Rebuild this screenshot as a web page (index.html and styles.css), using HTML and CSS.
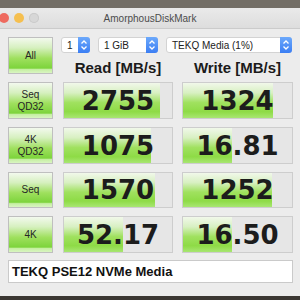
FILE: index.html
```html
<!DOCTYPE html>
<html>
<head>
  <meta name="viewport" content="width=device-width, initial-scale=1.0">
  <title>AmorphousDiskMark</title>
  <link rel="stylesheet" href="styles.css">
</head>
<body>
  <div class="desktop"></div>
  <!-- Window -->
  <div class="window">
    <div class="titlebar">
      <div class="lights">
        <span class="light close"></span>
        <span class="light min"></span>
        <span class="light zoom"></span>
      </div>
      <div class="title">AmorphousDiskMark</div>
      <div></div>
    </div>

    <div class="panel">
      <div class="tag">All</div>
      <div class="setup">
        <div class="selects">
          <div class="select s-count"><span>1</span><i class="stepper"><svg width="12" height="16" viewBox="0 0 12 16"><path d="M3.5 6.5 6 4 8.5 6.5M3.5 9.5 6 12 8.5 9.5" fill="none" stroke="#fff" stroke-width="1.3"/></svg></i></div>
          <div class="select s-size"><span>1 GiB</span><i class="stepper"><svg width="12" height="16" viewBox="0 0 12 16"><path d="M3.5 6.5 6 4 8.5 6.5M3.5 9.5 6 12 8.5 9.5" fill="none" stroke="#fff" stroke-width="1.3"/></svg></i></div>
          <div class="select s-target"><span>TEKQ Media (1%)</span><i class="stepper"><svg width="12" height="16" viewBox="0 0 12 16"><path d="M3.5 6.5 6 4 8.5 6.5M3.5 9.5 6 12 8.5 9.5" fill="none" stroke="#fff" stroke-width="1.3"/></svg></i></div>
        </div>
        <div class="heads">
          <div>Read [MB/s]</div>
          <div>Write [MB/s]</div>
        </div>
      </div>

      <!-- Seq QD32 -->
      <div class="tag">Seq<br>QD32</div>
      <div class="meter"><div class="bar" style="width: 88.8%"></div><div class="value">2755</div></div>
      <div class="meter"><div class="bar" style="width: 82.4%"></div><div class="value">1324</div></div>

      <!-- 4K QD32 -->
      <div class="tag">4K<br>QD32</div>
      <div class="meter"><div class="bar" style="width: 80.6%"></div><div class="value">1075</div></div>
      <div class="meter"><div class="bar" style="width: 44.5%"></div><div class="value">16.81</div></div>

      <!-- Seq -->
      <div class="tag">Seq</div>
      <div class="meter"><div class="bar" style="width: 83.9%"></div><div class="value">1570</div></div>
      <div class="meter"><div class="bar" style="width: 82%"></div><div class="value">1252</div></div>

      <!-- 4K -->
      <div class="tag">4K</div>
      <div class="meter"><div class="bar" style="width: 54.3%"></div><div class="value">52.17</div></div>
      <div class="meter"><div class="bar" style="width: 44.5%"></div><div class="value">16.50</div></div>

      <div class="drive">TEKQ PSE12 NVMe Media</div>
    </div>
  </div>
</body>
</html>
```

FILE: styles.css
```css
body {
  margin: 0;
  background-color: #3b3732;
  font-family: "Liberation Sans", Arial, sans-serif;
  overflow: hidden;
}
.desktop {
  height: 8px;
  background-color: #736e66;
}
.window {
  height: 288px;
  background-color: #ececec;
}
.titlebar {
  height: 20px;
  display: grid;
  grid-template-columns: 1fr auto 1fr;
  align-items: center;
  background: linear-gradient(#eaeaea, #dddddd);
  border-bottom: 1px solid #cbcbcb;
}
.lights {
  display: flex;
  gap: 5px;
  margin-left: -1px;
}
.light {
  width: 10px;
  height: 10px;
  border-radius: 50%;
}
.close {
  background-color: #ee6a5f;
}
.min {
  background-color: #f5bf4f;
}
.zoom {
  background-color: #d7d7d7;
  box-shadow: inset 0 0 0 1px #cacaca;
}
.title {
  font-size: 10px;
  color: #4c4c4c;
}
.panel {
  padding: 8px 0 0 8px;
  display: grid;
  grid-template-columns: 46px 110px 111px;
  grid-template-rows: 37px 37px 37px 36px 37px 22px;
  gap: 8px 9px;
}
.tag {
  width: 45px;
  box-sizing: border-box;
  border: 1px solid #bfbfbf;
  background: linear-gradient(#f3f9ee 0%, #d6f0bf 28%, #9fe05e 58%, #7dd43c 86%, #c6efa3 90%, #d9f5c2 100%);
  display: flex;
  align-items: center;
  justify-content: center;
  text-align: center;
  font-size: 10px;
  line-height: 12px;
  color: #262626;
}
.setup {
  grid-column: 2 / 4;
  display: flex;
  flex-direction: column;
  justify-content: space-between;
}
.selects {
  display: flex;
  gap: 8px;
  height: 16px;
  margin-left: -2px;
}
.select {
  display: flex;
  align-items: center;
  box-sizing: border-box;
  background-color: #ffffff;
  border: 1px solid #d3d3d3;
  border-radius: 3px;
  font-size: 10px;
  color: #222;
}
.select span {
  flex: 1;
  padding-left: 5px;
}
.s-count {
  width: 29px;
}
.s-size {
  width: 60px;
}
.s-target {
  width: 126px;
}
.stepper {
  width: 12px;
  align-self: stretch;
  margin: -1px -1px -1px 0;
  border-radius: 0 3px 3px 0;
  background: linear-gradient(#6ca9fb, #3b7ef3);
  display: flex;
  align-items: center;
}
.heads {
  display: grid;
  grid-template-columns: 110px 111px;
  column-gap: 9px;
  margin-bottom: -2px;
  text-align: center;
  font-size: 15px;
  line-height: 17px;
  font-weight: bold;
  color: #1b1b1b;
}
.meter {
  display: grid;
  box-sizing: border-box;
  border: 1px solid #cdcdcd;
  background-color: #e6e6e6;
}
.meter > * {
  grid-area: 1 / 1;
}
.bar {
  background: linear-gradient(#f1f8ea 0%, #d8f0c2 28%, #a0e15f 56%, #8edb46 82%, #a8e672 100%);
}
.value {
  align-self: center;
  text-align: center;
  font-family: "DejaVu Sans", sans-serif;
  font-weight: bold;
  font-size: 26px;
  color: #1c1c1c;
}
.drive {
  grid-column: 1 / 4;
  margin-top: -1px;
  box-sizing: border-box;
  border: 1px solid #cacaca;
  background-color: #ffffff;
  padding-left: 3px;
  display: flex;
  align-items: center;
  font-size: 13px;
  font-weight: bold;
  color: #111;
}
```
